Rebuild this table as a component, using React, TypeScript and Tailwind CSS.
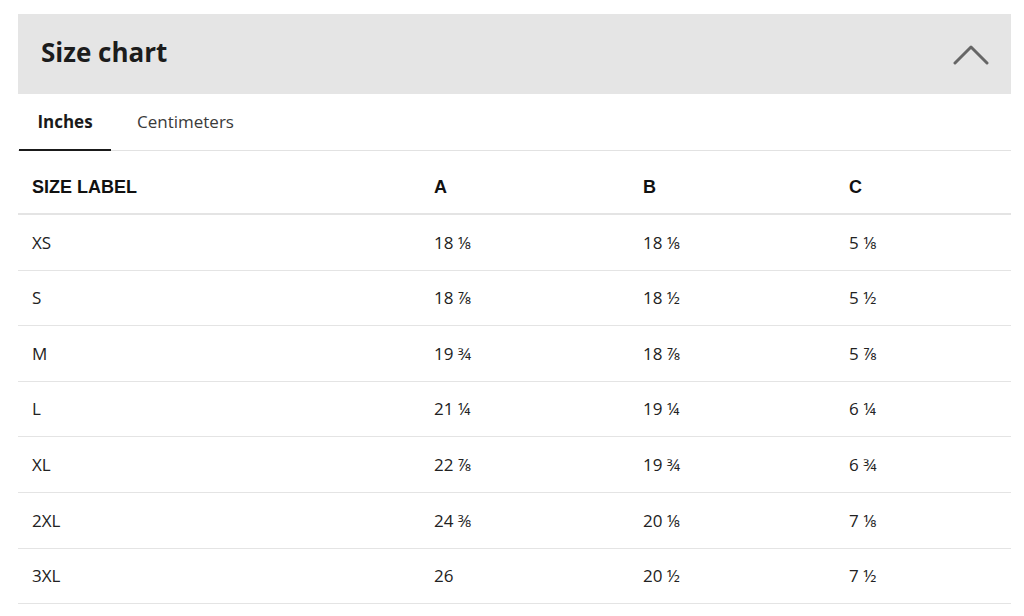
const rows: [string, string, string, string][] = [
  ["XS", "18 ⅛", "18 ⅛", "5 ⅛"],
  ["S", "18 ⅞", "18 ½", "5 ½"],
  ["M", "19 ¾", "18 ⅞", "5 ⅞"],
  ["L", "21 ¼", "19 ¼", "6 ¼"],
  ["XL", "22 ⅞", "19 ¾", "6 ¾"],
  ["2XL", "24 ⅜", "20 ⅛", "7 ⅛"],
  ["3XL", "26", "20 ½", "7 ½"],
];

export default function App() {
  return (
    <div className="w-[1024px] h-[616px] bg-white pt-[14px] pl-[18px] overflow-hidden font-['Open_Sans','Lato',sans-serif] text-[#1a1a1a]">
      <div className="w-[993px]">
        <div className="h-[80px] bg-[#e5e5e5] flex items-center justify-between pl-[23px] pr-[22px]">
          <h1 className="text-[26px] font-bold text-[#1c1c1c] -mt-[4px]">Size chart</h1>
          <svg width="36" height="22" viewBox="0 0 36 22" fill="none" className="mt-[2px]">
            <path d="M2 19 L18 3 L34 19" stroke="#666" strokeWidth="3" strokeLinecap="round" strokeLinejoin="round" />
          </svg>
        </div>

        <div className="h-[57px] flex border-b border-[#e2e2e2]">
          <div className="w-[92px] ml-[1px] flex items-center justify-center border-b-[2px] border-[#1a1a1a] -mb-[1px] text-[17px] font-bold">
            Inches
          </div>
          <div className="ml-[26px] flex items-center text-[17px] text-[#3a3a3a]">Centimeters</div>
        </div>

        <div className="h-[64px] flex items-center pt-[10px] border-b-2 border-[#e4e4e4] font-['Liberation_Sans',Arial,sans-serif] font-bold text-[18px] text-[#111]">
          <div className="w-[416px] pl-[14px]">SIZE LABEL</div>
          <div className="w-[209px]">A</div>
          <div className="w-[206px]">B</div>
          <div>C</div>
        </div>

        {rows.map((r) => (
          <div key={r[0]} className="h-[55.6px] flex items-center border-b border-[#e4e4e4] text-[17px] text-[#222]">
            <div className="w-[416px] pl-[14px]">{r[0]}</div>
            <div className="w-[209px]">{r[1]}</div>
            <div className="w-[206px]">{r[2]}</div>
            <div>{r[3]}</div>
          </div>
        ))}
      </div>
    </div>
  );
}
